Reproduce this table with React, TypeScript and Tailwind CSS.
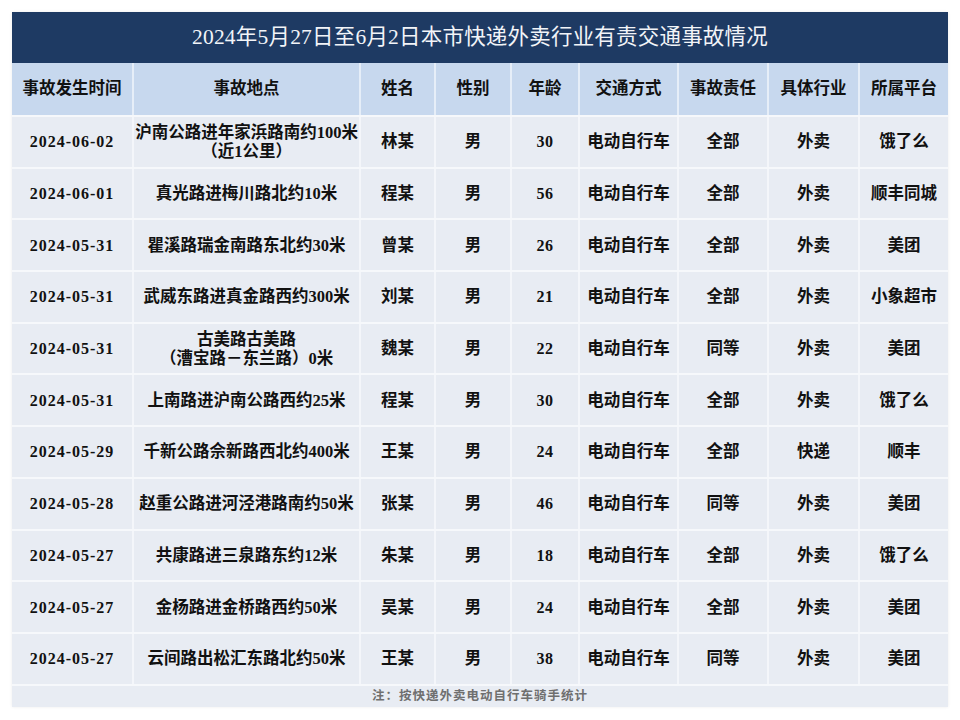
import React from "react";

const cols = "grid grid-cols-[120px_227px_75px_76px_68px_99px_90px_91px_90px]";

const headers = ["事故发生时间", "事故地点", "姓名", "性别", "年龄", "交通方式", "事故责任", "具体行业", "所属平台"];

const rows: string[][] = [
  ["2024-06-02", "沪南公路进年家浜路南约100米\n（近1公里）", "林某", "男", "30", "电动自行车", "全部", "外卖", "饿了么"],
  ["2024-06-01", "真光路进梅川路北约10米", "程某", "男", "56", "电动自行车", "全部", "外卖", "顺丰同城"],
  ["2024-05-31", "瞿溪路瑞金南路东北约30米", "曾某", "男", "26", "电动自行车", "全部", "外卖", "美团"],
  ["2024-05-31", "武威东路进真金路西约300米", "刘某", "男", "21", "电动自行车", "全部", "外卖", "小象超市"],
  ["2024-05-31", "古美路古美路\n（漕宝路－东兰路）0米", "魏某", "男", "22", "电动自行车", "同等", "外卖", "美团"],
  ["2024-05-31", "上南路进沪南公路西约25米", "程某", "男", "30", "电动自行车", "全部", "外卖", "饿了么"],
  ["2024-05-29", "千新公路佘新路西北约400米", "王某", "男", "24", "电动自行车", "全部", "快递", "顺丰"],
  ["2024-05-28", "赵重公路进河泾港路南约50米", "张某", "男", "46", "电动自行车", "同等", "外卖", "美团"],
  ["2024-05-27", "共康路进三泉路东约12米", "朱某", "男", "18", "电动自行车", "全部", "外卖", "饿了么"],
  ["2024-05-27", "金杨路进金桥路西约50米", "吴某", "男", "24", "电动自行车", "全部", "外卖", "美团"],
  ["2024-05-27", "云间路出松汇东路北约50米", "王某", "男", "38", "电动自行车", "同等", "外卖", "美团"],
];

const font = { fontFamily: '"Liberation Serif", "Noto Sans CJK SC", serif' };

export default function App() {
  return (
    <div className="w-[960px] h-[720px] bg-white pt-[12px] pl-[12px]" style={font}>
      <div className="w-[936px] shadow-[0_0_3px_rgba(0,0,0,0.08)]">
        <div className="h-[51px] bg-[#1e3a63] flex items-center justify-center text-[21.5px] text-[#f2f4f8] tracking-[0.2px] pb-[1px]">
          2024年5月27日至6月2日本市快递外卖行业有责交通事故情况
        </div>
        <div className={`${cols} h-[52px] bg-[#c7d8ee]`}>
          {headers.map((h, i) => (
            <div
              key={i}
              className={`flex items-center justify-center text-[16.5px] font-semibold text-[#111] ${i > 0 ? "border-l-2 border-[#e6eef8]" : ""}`}
            >
              {h}
            </div>
          ))}
        </div>
        {rows.map((r, ri) => (
          <div key={ri} className={`${cols} h-[51.7px] bg-[#e8ecf3] border-t-2 border-[#f6f8fb]`}>
            {r.map((c, i) => (
              <div
                key={i}
                className={`flex items-center justify-center text-center whitespace-pre-line leading-[19px] font-semibold text-[#111] ${i === 0 ? "text-[16px] tracking-[1px]" : i === 4 ? "text-[16px] tracking-[0.5px]" : "text-[16.5px]"} ${i > 0 ? "border-l-2 border-[#f4f6fa]" : ""}`}
              >
                {c}
              </div>
            ))}
          </div>
        ))}
        <div className="h-[23px] bg-[#e8ecf3] border-t-2 border-[#f6f8fb] flex items-center justify-center text-[12.5px] font-bold text-[#6f6f6f] tracking-[1px]">
          注：按快递外卖电动自行车骑手统计
        </div>
      </div>
    </div>
  );
}
